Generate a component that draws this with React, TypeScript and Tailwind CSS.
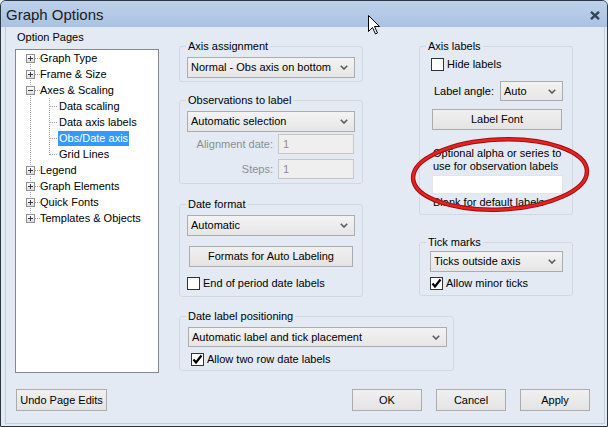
import React from "react";

const Chevron = () => (
  <svg width="8" height="5" viewBox="0 0 8 5" className="shrink-0">
    <polyline points="0.8,0.8 4,4 7.2,0.8" fill="none" stroke="#5a5a5a" strokeWidth="1.6" />
  </svg>
);

function Select({ label, className = "" }: { label: string; className?: string }) {
  return (
    <div
      className={`flex items-center justify-between pl-[3px] pr-[6px] border border-[#acacac] bg-gradient-to-b from-[#f3f3f3] to-[#e6e6e6] ${className}`}
    >
      <span className="whitespace-nowrap">{label}</span>
      <Chevron />
    </div>
  );
}

function Check({ checked, label }: { checked?: boolean; label: string }) {
  return (
    <div className="flex items-center h-[13px]">
      <div className="w-[13px] h-[13px] shrink-0 border border-[#333333] bg-white flex items-center justify-center">
        {checked && (
          <svg width="11" height="11" viewBox="0 0 11 11">
            <path d="M1.5 5.5 L4 8.5 L9.5 1.5" fill="none" stroke="#000" strokeWidth="2.2" />
          </svg>
        )}
      </div>
      <span className="ml-[3px] whitespace-nowrap">{label}</span>
    </div>
  );
}

function Btn({ children, className = "" }: { children: React.ReactNode; className?: string }) {
  return (
    <button
      type="button"
      className={`flex items-center justify-center border border-[#acacac] bg-gradient-to-b from-[#f0f0f0] to-[#e4e4e4] whitespace-nowrap ${className}`}
    >
      {children}
    </button>
  );
}

// Group box: the legend sits on the top border, the body carries its own padding
function Group({
  title,
  className = "",
  inner = "",
  children,
}: {
  title: string;
  className?: string;
  inner?: string;
  children: React.ReactNode;
}) {
  return (
    <fieldset className={`min-w-0 border border-[#d0d9e3] rounded-[3px] ${className}`}>
      <legend className="ml-[6px] px-[2px] leading-[14px]">{title}</legend>
      <div className={inner}>{children}</div>
    </fieldset>
  );
}

type Node = { label: string; level: 0 | 1; expander?: "+" | "-"; selected?: boolean };

const nodes: Node[] = [
  { label: "Graph Type", level: 0, expander: "+" },
  { label: "Frame & Size", level: 0, expander: "+" },
  { label: "Axes & Scaling", level: 0, expander: "-" },
  { label: "Data scaling", level: 1 },
  { label: "Data axis labels", level: 1 },
  { label: "Obs/Date axis", level: 1, selected: true },
  { label: "Grid Lines", level: 1 },
  { label: "Legend", level: 0, expander: "+" },
  { label: "Graph Elements", level: 0, expander: "+" },
  { label: "Quick Fonts", level: 0, expander: "+" },
  { label: "Templates & Objects", level: 0, expander: "+" },
];

function TreeLines() {
  const dot = { stroke: "#a0a0a0", strokeWidth: 1, strokeDasharray: "1 1", shapeRendering: "crispEdges" as const };
  return (
    <svg className="absolute left-0 top-0 pointer-events-none" width="142" height="200">
      <line x1="14.5" y1="8" x2="14.5" y2="169" {...dot} />
      <line x1="33.5" y1="48" x2="33.5" y2="105" {...dot} />
      {nodes.map((n, i) => {
        const c = 8 + i * 16 + 0.5;
        return n.level === 0 ? (
          <line key={i} x1="19" y1={c} x2="24" y2={c} {...dot} />
        ) : (
          <line key={i} x1="34" y1={c} x2="42" y2={c} {...dot} />
        );
      })}
      <defs>
        <linearGradient id="exp" x1="0" y1="0" x2="0" y2="1">
          <stop offset="0" stopColor="#ffffff" />
          <stop offset="1" stopColor="#dcdcdc" />
        </linearGradient>
      </defs>
      {nodes.map((n, i) => {
        if (!n.expander) return null;
        const c = 8 + i * 16;
        return (
          <g key={`e${i}`} shapeRendering="crispEdges">
            <rect x="10.5" y={c - 3.5} width="8" height="8" fill="url(#exp)" stroke="#919191" />
            <line x1="12" y1={c + 0.5} x2="17" y2={c + 0.5} stroke="#2b3d5a" />
            {n.expander === "+" && <line x1="14.5" y1={c - 2} x2="14.5" y2={c + 3} stroke="#2b3d5a" />}
          </g>
        );
      })}
    </svg>
  );
}

export default function App() {
  return (
    <div className="relative w-[608px] h-[427px] overflow-hidden bg-[#e3eaf3] font-['Liberation_Sans',Arial,sans-serif] text-[11px] leading-[13px] text-black">
      <div className="flex flex-col w-full h-full border border-[#2c3744] rounded-t-[6px] bg-[#e3eaf3]">
        {/* title bar */}
        <div className="h-[26px] shrink-0 flex items-center justify-between pl-[5px] pr-[7px] pt-[2px] bg-gradient-to-b from-[#bed1ea] to-[#aac2e2] rounded-t-[5px]">
          <span className="text-[15px] leading-[18px] text-[#1b1b1b]">Graph Options</span>
          <svg width="10" height="9" viewBox="0 0 10 9">
            <path d="M1 0.8 L9 8.2 M9 0.8 L1 8.2" stroke="#354658" strokeWidth="2.4" />
          </svg>
        </div>

        {/* client area */}
        <div className="flex-1 ml-[4px] mr-[2px] mb-[2px] border-x border-b border-[#c3cedb] flex flex-col pl-[9px] pr-[14px]">
          <div className="flex items-start">
            {/* option pages */}
            <div className="w-[144px] shrink-0 pt-[4px] flex flex-col">
              <div className="pl-[2px]">Option Pages</div>
              <div className="mt-[5px] h-[324px] border border-[#828790] bg-white">
                <div className="relative">
                  <TreeLines />
                  {nodes.map((n) => (
                    <div
                      key={n.label}
                      className={`h-[16px] flex items-center whitespace-nowrap ${n.level === 0 ? "pl-[24px]" : "pl-[42px]"}`}
                    >
                      {n.selected ? (
                        <span className="px-[1px] leading-[15px] bg-[#3399ff] text-white">{n.label}</span>
                      ) : (
                        <span className={n.level === 1 ? "pl-[1px]" : ""}>{n.label}</span>
                      )}
                    </div>
                  ))}
                </div>
              </div>
            </div>

            {/* settings */}
            <div className="ml-[20px] flex flex-col">
              <div className="flex items-start">
                {/* middle column */}
                <div className="w-[184px] pt-[12px] flex flex-col">
                  <Group title="Axis assignment" inner="px-[7px] pt-[4px] pb-[3px]">
                    <Select label="Normal - Obs axis on bottom" className="h-[21px]" />
                  </Group>

                  <Group title="Observations to label" className="mt-[11px]" inner="px-[7px] pt-[4px] pb-[4px]">
                    <Select label="Automatic selection" className="h-[21px]" />
                    <div className="mt-[2px] flex items-center justify-end gap-[5px] pr-[1px]">
                      <span className="text-[#8e8e8e]">Alignment date:</span>
                      <div className="w-[76px] h-[20px] border border-[#c6c6c6] bg-[#efefef] pl-[4px] flex items-center text-[#8e8e8e]">
                        1
                      </div>
                    </div>
                    <div className="mt-[5px] flex items-center justify-end gap-[5px] pr-[1px]">
                      <span className="text-[#8e8e8e]">Steps:</span>
                      <div className="w-[76px] h-[20px] border border-[#c6c6c6] bg-[#efefef] pl-[4px] flex items-center text-[#8e8e8e]">
                        1
                      </div>
                    </div>
                  </Group>

                  <Group title="Date format" className="mt-[13px]" inner="px-[7px] pt-[4px] pb-[6px]">
                    <Select label="Automatic" className="h-[21px]" />
                    <Btn className="mt-[10px] mx-[2px] h-[21px] w-[164px]">Formats for Auto Labeling</Btn>
                    <div className="mt-[10px]">
                      <Check label="End of period date labels" />
                    </div>
                  </Group>
                </div>

                {/* right column */}
                <div className="ml-[56px] w-[154px] pt-[12px] flex flex-col">
                  <Group title="Axis labels" inner="pl-[11px] pr-[10px] pt-[5px] pb-[5px]">
                    <Check label="Hide labels" />
                    <div className="mt-[10px] flex items-center pl-[3px]">
                      <span className="whitespace-nowrap">Label angle:</span>
                      <Select label="Auto" className="ml-[auto] w-[63px] h-[20px] -mr-[1px]" />
                    </div>
                    <Btn className="mt-[8px] ml-[1px] w-[130px] h-[21px]">Label Font</Btn>
                    <div className="mt-[17px] pl-[2px] whitespace-nowrap">
                      <div>Optional alpha or series to</div>
                      <div>use for observation labels</div>
                    </div>
                    <div className="mt-[2px] ml-[1px] w-[131px] h-[19px] border border-[#e2e4e8] bg-white" />
                    <div className="mt-[2px] pl-[2px] whitespace-nowrap">Blank for default labels</div>
                  </Group>

                  <Group title="Tick marks" className="mt-[20px]" inner="pl-[10px] pr-[9px] pt-[2px] pb-[5px]">
                    <Select label="Ticks outside axis" className="h-[21px]" />
                    <div className="mt-[5px]">
                      <Check checked label="Allow minor ticks" />
                    </div>
                  </Group>
                </div>
              </div>

              <Group
                title="Date label positioning"
                className="mt-[12px] w-[275px]"
                inner="pl-[8px] pr-[6px] pt-[4px] pb-[4px]"
              >
                <Select label="Automatic label and tick placement" className="h-[20px]" />
                <div className="mt-[6px] ml-[3px]">
                  <Check checked label="Allow two row date labels" />
                </div>
              </Group>
            </div>
          </div>

          {/* dialog buttons */}
          <div className="mt-[16px] flex items-center">
            <Btn className="ml-[1px] w-[91px] h-[22px]">Undo Page Edits</Btn>
            <Btn className="ml-auto w-[70px] h-[22px] border-[#4a8fd6]">OK</Btn>
            <Btn className="ml-[14px] w-[70px] h-[22px]">Cancel</Btn>
            <Btn className="ml-[14px] w-[70px] h-[22px]">Apply</Btn>
          </div>
        </div>
      </div>

      {/* annotation ring */}
      <svg className="absolute left-0 top-0 pointer-events-none" width="608" height="427">
        <g transform="rotate(-2.5 500 174.5)">
          <ellipse cx="500" cy="174.5" rx="87" ry="35" fill="none" stroke="#a30d12" strokeWidth="4.5" />
          <ellipse cx="500" cy="174.5" rx="87" ry="35" fill="none" stroke="#e3241f" strokeWidth="2.4" />
        </g>
      </svg>

      {/* mouse pointer */}
      <svg className="absolute left-[368px] top-[15px] pointer-events-none" width="13" height="20" viewBox="0 0 13 20">
        <path
          d="M0.5 0.5 L0.5 16.5 L4.5 12.5 L7.5 19 L9.5 18 L6.5 11.5 L11.5 11.5 Z"
          fill="#ffffff"
          stroke="#000000"
          strokeWidth="1"
          strokeLinejoin="miter"
        />
      </svg>
    </div>
  );
}
